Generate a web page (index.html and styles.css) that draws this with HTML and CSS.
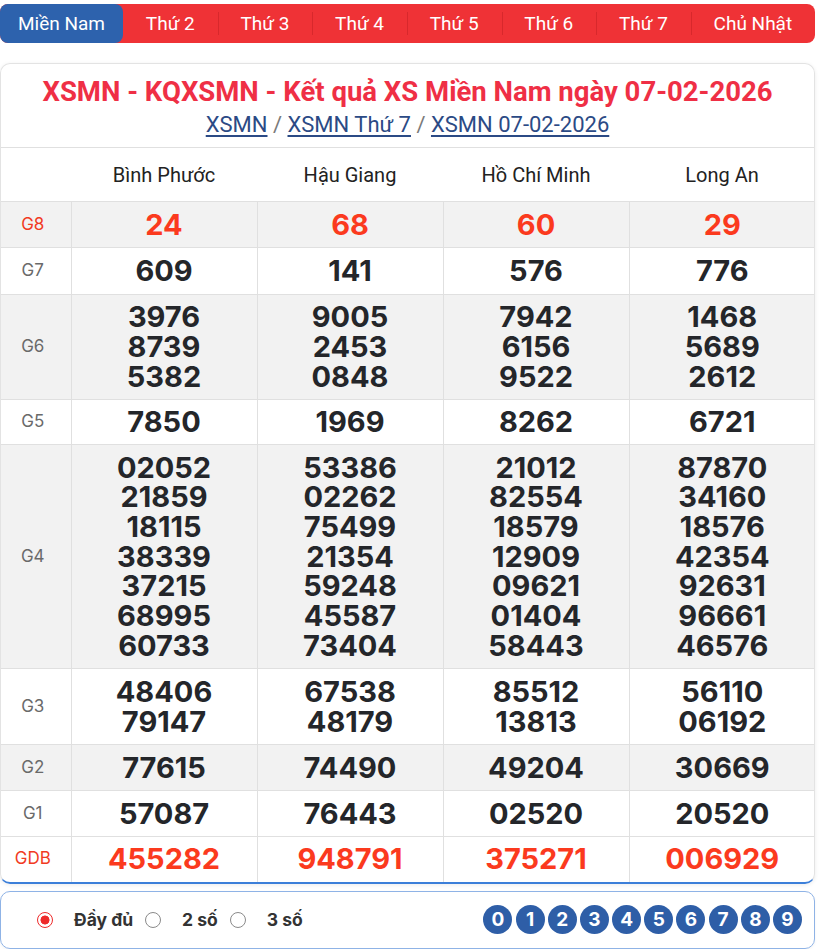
FILE: index.html
```html
<!DOCTYPE html>
<html lang="vi">
<head>
<meta charset="utf-8">
<link rel="stylesheet" href="styles.css">
</head>
<body>
<div class="page">
  <nav class="tabs">
    <a class="tab active">Miền Nam</a>
    <a class="tab">Thứ 2</a>
    <a class="tab">Thứ 3</a>
    <a class="tab">Thứ 4</a>
    <a class="tab">Thứ 5</a>
    <a class="tab">Thứ 6</a>
    <a class="tab">Thứ 7</a>
    <a class="tab last">Chủ Nhật</a>
  </nav>

  <section class="card">
    <h1 class="title">XSMN - KQXSMN - Kết quả XS Miền Nam ngày 07-02-2026</h1>
    <div class="crumbs"><a>XSMN</a> / <a>XSMN Thứ 7</a> / <a>XSMN 07-02-2026</a></div>
    <table class="results">
      <thead>
        <tr class="head"><th class="lbl"></th><th>Bình Phước</th><th>Hậu Giang</th><th>Hồ Chí Minh</th><th>Long An</th></tr>
      </thead>
      <tbody>
        <tr class="gray red r1"><td class="lbl">G8</td><td>24</td><td>68</td><td>60</td><td>29</td></tr>
        <tr class="r1 tall"><td class="lbl">G7</td><td>609</td><td>141</td><td>576</td><td>776</td></tr>
        <tr class="gray r3"><td class="lbl">G6</td><td>3976<br>8739<br>5382</td><td>9005<br>2453<br>0848</td><td>7942<br>6156<br>9522</td><td>1468<br>5689<br>2612</td></tr>
        <tr class="r1 short"><td class="lbl">G5</td><td>7850</td><td>1969</td><td>8262</td><td>6721</td></tr>
        <tr class="gray r7"><td class="lbl">G4</td><td>02052<br>21859<br>18115<br>38339<br>37215<br>68995<br>60733</td><td>53386<br>02262<br>75499<br>21354<br>59248<br>45587<br>73404</td><td>21012<br>82554<br>18579<br>12909<br>09621<br>01404<br>58443</td><td>87870<br>34160<br>18576<br>42354<br>92631<br>96661<br>46576</td></tr>
        <tr class="r2"><td class="lbl">G3</td><td>48406<br>79147</td><td>67538<br>48179</td><td>85512<br>13813</td><td>56110<br>06192</td></tr>
        <tr class="gray r1"><td class="lbl">G2</td><td>77615</td><td>74490</td><td>49204</td><td>30669</td></tr>
        <tr class="r1"><td class="lbl">G1</td><td>57087</td><td>76443</td><td>02520</td><td>20520</td></tr>
        <tr class="red r1 short"><td class="lbl">GDB</td><td>455282</td><td>948791</td><td>375271</td><td>006929</td></tr>
      </tbody>
    </table>
  </section>

  <section class="options">
    <div class="radios">
      <label class="opt"><span class="radio on"></span><span class="opt-text">Đầy đủ</span></label>
      <label class="opt"><span class="radio"></span><span class="opt-text">2 số</span></label>
      <label class="opt"><span class="radio"></span><span class="opt-text">3 số</span></label>
    </div>
    <div class="digits">
      <span class="dg">0</span><span class="dg">1</span><span class="dg">2</span><span class="dg">3</span><span class="dg">4</span><span class="dg">5</span><span class="dg">6</span><span class="dg">7</span><span class="dg">8</span><span class="dg">9</span>
    </div>
  </section>
</div>
</body>
</html>
```

FILE: styles.css
```css
* { box-sizing: border-box; }
html, body { margin: 0; padding: 0; background: #fff; }
body { font-family: Roboto, "Liberation Sans", sans-serif; color: #222; }

.page { width: 815px; padding-top: 4px; }

.tabs {
  display: flex;
  height: 39px;
  background: #ef3236;
  border-radius: 8px;
}
.tab {
  flex: 1 1 auto;
  display: flex;
  align-items: center;
  justify-content: center;
  color: #fff;
  font-size: 19px;
  padding: 0 12px;
  position: relative;
}
.tab + .tab:not(:nth-child(2))::before {
  content: "";
  position: absolute;
  left: 0;
  top: 8px;
  bottom: 8px;
  width: 1px;
  background: #d8282c;
}
.tab.active {
  background: #2d62ad;
  border-radius: 8px;
  flex: 0 0 123px;
}

.card {
  margin-top: 20px;
  border: 1px solid #e3e3e3;
  border-bottom: 2px solid #3c7fd9;
  border-radius: 10px;
  box-shadow: 0 1px 4px rgba(0,0,0,0.08);
  overflow: hidden;
}
.title {
  margin: 0;
  padding-top: 13px;
  text-align: center;
  font-size: 27.5px;
  font-weight: 700;
  color: #ef2f45;
  line-height: 30px;
}
.crumbs {
  text-align: center;
  font-size: 22px;
  line-height: 26px;
  margin-top: 5px;
  color: #7a7a7a;
  padding-bottom: 9px;
}
.crumbs a { color: #2b4a85; text-decoration: underline; text-underline-offset: 3px; }

.results {
  width: 100%;
  border-collapse: collapse;
  table-layout: fixed;
}
.results th {
  border-top: 1px solid #e0e0e0;
  height: 54px;
  font-weight: 400;
  font-size: 20px;
  color: #222;
  text-align: center;
  width: 186px;
}
.results th.lbl { width: 70px; }
.results td {
  border-top: 1px solid #e0e0e0;
  border-left: 1px solid #e0e0e0;
  text-align: center;
  vertical-align: middle;
  padding: 0;
  font-family: Inter, "Liberation Sans", sans-serif;
  font-weight: 700;
  font-size: 29px;
  line-height: 29.7px;
  color: #24262a;
}
.results tr.r1 { height: 46px; }
.results tr.r1.tall { height: 47px; }
.results tr.r1.short { height: 45px; }
.results tr.r2 { height: 76px; }
.results tr.r3 { height: 105px; }
.results tr.r7 { height: 224px; }
.results td.lbl {
  border-left: none;
  font-weight: 400;
  font-size: 17px;
  color: #6a6a6a;
  padding-right: 6px;
}
.results tr.gray td { background: #f2f2f2; }
.results tr.red td { color: #fb3a1e; }
.results tr.red td.lbl { color: #f13a23; }

.options {
  margin-top: 7px;
  height: 58px;
  border: 1px solid #8fb3e6;
  border-radius: 10px;
  display: flex;
  align-items: center;
  justify-content: space-between;
  padding: 0 12px 0 36px;
  box-shadow: 0 1px 3px rgba(0,0,0,0.05);
}
.radios { display: flex; align-items: center; }
.opt { display: flex; align-items: center; }
.radio {
  width: 16px; height: 16px;
  border: 1px solid #8a8a8a;
  border-radius: 50%;
  display: inline-block;
  margin-right: 21px;
  background: #fff;
}
.radio.on {
  border: 1.5px solid #ee2a2a;
  background: radial-gradient(circle, #ee2a2a 0 4.2px, #fff 4.8px);
}
.opt-text {
  font-family: Inter, "Liberation Sans", sans-serif;
  font-weight: 700;
  font-size: 17.5px;
  color: #333;
  margin-right: 12px;
}
.digits { display: flex; gap: 3.2px; }
.dg {
  width: 29px; height: 29px;
  border-radius: 50%;
  background: #2e5ea7;
  color: #fff;
  font-family: Inter, "Liberation Sans", sans-serif;
  font-weight: 700;
  font-size: 19px;
  display: flex;
  align-items: center;
  justify-content: center;
}
```
